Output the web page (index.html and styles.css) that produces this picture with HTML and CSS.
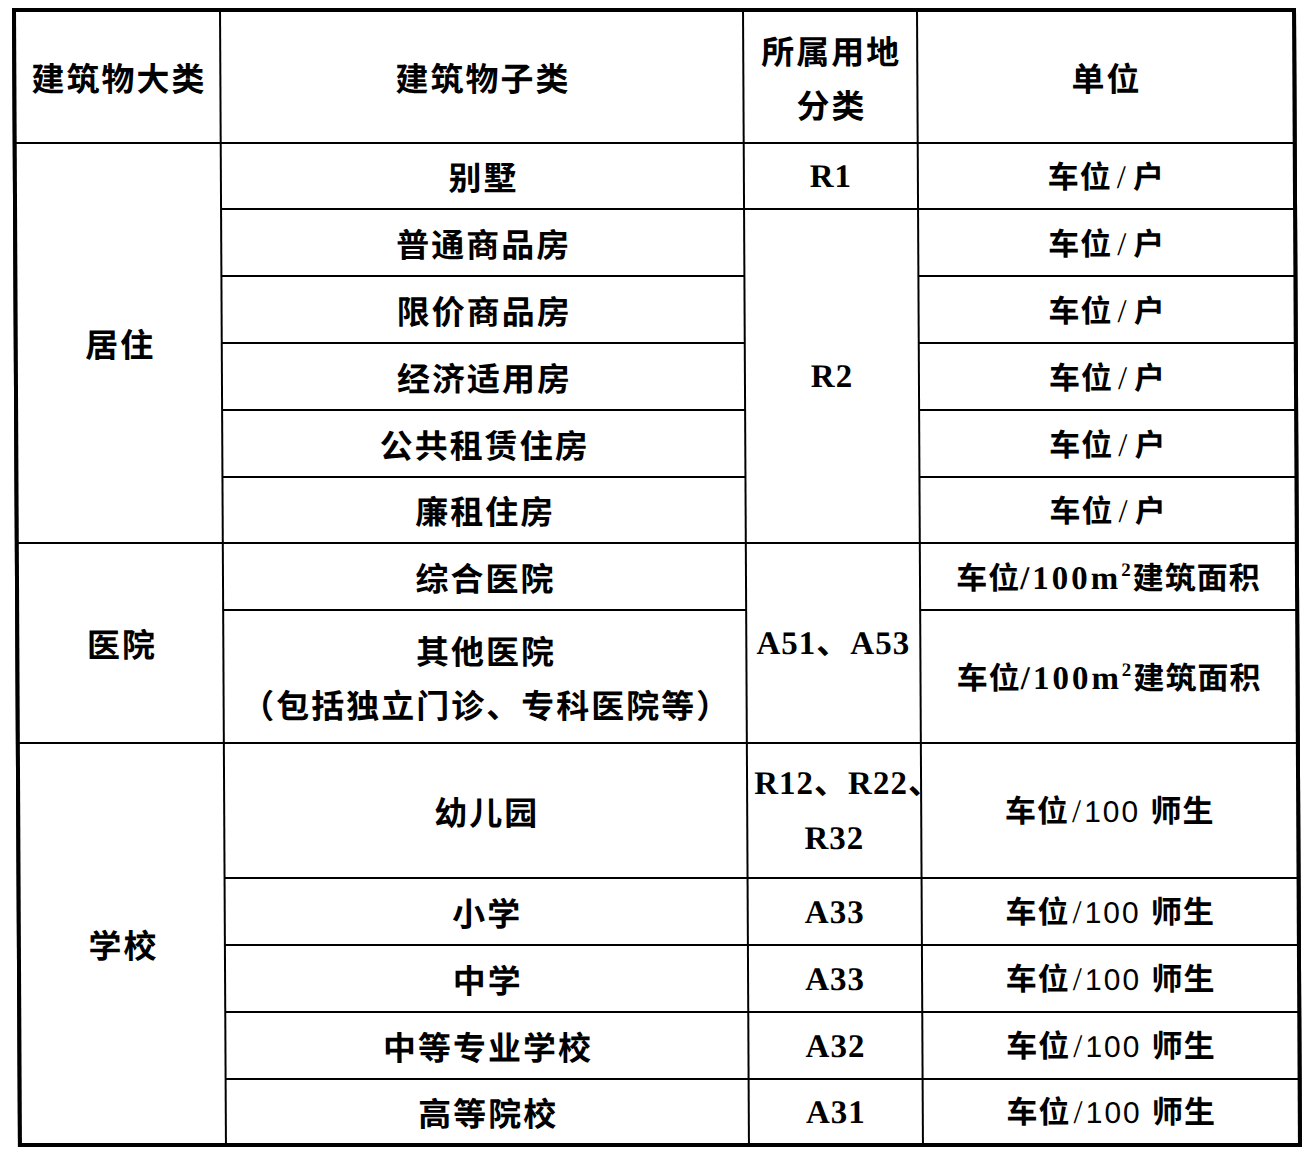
FILE: index.html
```html
<!DOCTYPE html>
<html lang="zh-CN">
<head>
<meta charset="utf-8">
<title>停车配建指标分类</title>
<link rel="stylesheet" href="styles.css">
</head>
<body>
<table class="sheet">
  <colgroup>
    <col class="c1"><col class="c2"><col class="c3"><col class="c4">
  </colgroup>
  <thead>
    <tr class="r-head">
      <th>建筑物大类</th>
      <th>建筑物子类</th>
      <th class="two">所属用地<br>分类</th>
      <th>单位</th>
    </tr>
  </thead>
  <tbody>
    <tr class="r64">
      <td rowspan="6" class="cat">居住</td>
      <td>别墅</td>
      <td class="land">R1</td>
      <td class="unit">车位<span class="sl">/</span>户</td>
    </tr>
    <tr class="r65">
      <td>普通商品房</td>
      <td rowspan="5" class="land">R2</td>
      <td class="unit">车位<span class="sl">/</span>户</td>
    </tr>
    <tr class="r65">
      <td>限价商品房</td>
      <td class="unit">车位<span class="sl">/</span>户</td>
    </tr>
    <tr class="r65">
      <td>经济适用房</td>
      <td class="unit">车位<span class="sl">/</span>户</td>
    </tr>
    <tr class="r65">
      <td>公共租赁住房</td>
      <td class="unit">车位<span class="sl">/</span>户</td>
    </tr>
    <tr class="r64">
      <td>廉租住房</td>
      <td class="unit">车位<span class="sl">/</span>户</td>
    </tr>
    <tr class="r65">
      <td rowspan="2" class="cat">医院</td>
      <td>综合医院</td>
      <td rowspan="2" class="land">A51、A53</td>
      <td class="unit">车位<span class="ser">/100m<sup>2</sup></span>建筑面积</td>
    </tr>
    <tr class="r131">
      <td class="two">其他医院<br>（包括独立门诊、专科医院等）</td>
      <td class="unit">车位<span class="ser">/100m<sup>2</sup></span>建筑面积</td>
    </tr>
    <tr class="r133">
      <td rowspan="5" class="cat">学校</td>
      <td>幼儿园</td>
      <td class="land two"><span class="tight">R12、R22、</span><br>R32</td>
      <td class="unit">车位<span class="sl2">/</span><span class="sans">100 </span>师生</td>
    </tr>
    <tr class="r65">
      <td>小学</td>
      <td class="land">A33</td>
      <td class="unit">车位<span class="sl2">/</span><span class="sans">100 </span>师生</td>
    </tr>
    <tr class="r65">
      <td>中学</td>
      <td class="land">A33</td>
      <td class="unit">车位<span class="sl2">/</span><span class="sans">100 </span>师生</td>
    </tr>
    <tr class="r65">
      <td>中等专业学校</td>
      <td class="land">A32</td>
      <td class="unit">车位<span class="sl2">/</span><span class="sans">100 </span>师生</td>
    </tr>
    <tr class="r63">
      <td>高等院校</td>
      <td class="land">A31</td>
      <td class="unit">车位<span class="sl2">/</span><span class="sans">100 </span>师生</td>
    </tr>
  </tbody>
</table>
</body>
</html>
```

FILE: styles.css
```css
html, body {
  margin: 0;
  padding: 0;
  background: #ffffff;
}

.sheet {
  margin: 8px 0 0 12px;
  width: 1284px;
  table-layout: fixed;
  border-collapse: separate;
  border-spacing: 2px;
  border: 2px solid #000;
  background: #000;
  color: #000;
  font-family: "Noto Sans CJK SC", sans-serif;
  font-weight: 700;
  font-size: 33px;
  letter-spacing: 2px;
  transform: skewX(0.3deg);
  transform-origin: 0 0;
}

.c1 { width: 203px; }
.c2 { width: 521px; }
.c3 { width: 172px; }
.c4 { width: 374px; }

.sheet th,
.sheet td {
  background: #fff;
  padding: 0 0 0 2px;
  text-align: center;
  vertical-align: middle;
  white-space: nowrap;
  font-weight: 700;
  line-height: 40px;
}

.sheet .two { line-height: 54px; }

.r-head { height: 130px; }
.r63 { height: 63px; }
.r64 { height: 64px; }
.r65 { height: 65px; }
.r131 { height: 131px; }
.r133 { height: 133px; }

.sheet .land {
  font-family: "Liberation Serif", "Noto Sans CJK SC", serif;
  font-size: 33px;
  letter-spacing: 1px;
  padding: 0;
}

.sheet .land.two { line-height: 55px; }

.tight { margin-right: -28px; }

.sheet .unit {
  font-size: 31px;
  letter-spacing: 1px;
  padding-left: 1px;
}

.sl {
  font-family: "Liberation Serif", serif;
  font-weight: 400;
  font-size: 33px;
  margin: 0 6px 0 5px;
}

.sl2 {
  font-family: "Liberation Serif", serif;
  font-weight: 400;
  font-size: 33px;
  margin: 0 2px 0 3px;
}

.ser {
  font-family: "Liberation Serif", serif;
  font-size: 33px;
  letter-spacing: 3px;
}

.ser sup {
  font-size: 19px;
  line-height: 0;
  vertical-align: 13px;
  letter-spacing: 2px;
}

.sans {
  font-family: "Liberation Sans", sans-serif;
  font-weight: 400;
  font-size: 30px;
  letter-spacing: 2px;
}
```
